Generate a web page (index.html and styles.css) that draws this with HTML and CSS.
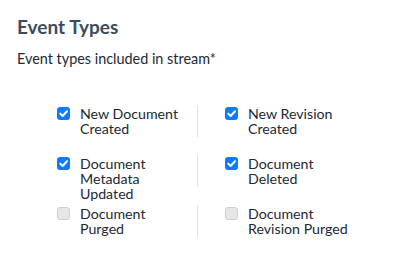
FILE: index.html
```html
<!DOCTYPE html>
<html>
<head>
<meta charset="utf-8">
<link rel="stylesheet" href="styles.css">
</head>
<body>
<section class="panel">
  <h2 class="title">Event Types</h2>
  <p class="subtitle">Event types included in stream*</p>
  <div class="grid">
    <label class="item">
      <span class="box checked"><svg viewBox="0 0 13 13" width="13" height="13"><path d="M3.2 6.6 L5.6 9 L10 4.2" fill="none" stroke="#fff" stroke-width="2" stroke-linecap="round" stroke-linejoin="round"/></svg></span>
      <span class="text">New Document Created</span>
    </label>
    <label class="item sep">
      <span class="box checked"><svg viewBox="0 0 13 13" width="13" height="13"><path d="M3.2 6.6 L5.6 9 L10 4.2" fill="none" stroke="#fff" stroke-width="2" stroke-linecap="round" stroke-linejoin="round"/></svg></span>
      <span class="text">New Revision Created</span>
    </label>
    <label class="item">
      <span class="box checked"><svg viewBox="0 0 13 13" width="13" height="13"><path d="M3.2 6.6 L5.6 9 L10 4.2" fill="none" stroke="#fff" stroke-width="2" stroke-linecap="round" stroke-linejoin="round"/></svg></span>
      <span class="text">Document Metadata Updated</span>
    </label>
    <label class="item sep">
      <span class="box checked"><svg viewBox="0 0 13 13" width="13" height="13"><path d="M3.2 6.6 L5.6 9 L10 4.2" fill="none" stroke="#fff" stroke-width="2" stroke-linecap="round" stroke-linejoin="round"/></svg></span>
      <span class="text">Document Deleted</span>
    </label>
    <label class="item">
      <span class="box"></span>
      <span class="text">Document Purged</span>
    </label>
    <label class="item sep">
      <span class="box"></span>
      <span class="text">Document Revision Purged</span>
    </label>
  </div>
</section>
</body>
</html>
```

FILE: styles.css
```css
html, body {
  margin: 0;
  padding: 0;
  background: #ffffff;
}
body {
  font-family: "Lato", "Open Sans", sans-serif;
  color: #222a33;
}
.panel {
  padding: 14px 17px 0 17px;
}
.title {
  margin: 0;
  font-size: 19px;
  line-height: 26px;
  font-weight: 700;
  color: #3a4d5e;
}
.subtitle {
  margin: 10px 0 0 0;
  font-size: 14.4px;
  line-height: 18px;
  color: #222a33;
}
.grid {
  display: grid;
  grid-template-columns: 168px 168px;
  grid-auto-rows: minmax(45px, auto);
  row-gap: 5px;
  margin: 38px 0 0 12px;
}
.item {
  display: flex;
  align-items: flex-start;
  gap: 10px;
  padding-left: 28px;
  align-self: start;
}
.item.sep {
  border-left: 1px solid #e2e2e2;
  padding-left: 27px;
  padding-top: 1px;
  padding-bottom: 1px;
  margin-top: -1px;
}
.box {
  flex: none;
  width: 13px;
  height: 13px;
  margin-top: 1px;
  border-radius: 3px;
  box-sizing: border-box;
  background: #e6e6e6;
  border: 1px solid #cfcfcf;
  display: flex;
}
.box.checked {
  background: #0b7cff;
  border: none;
}
.text {
  font-size: 14.2px;
  line-height: 15px;
  width: 100px;
}
```
